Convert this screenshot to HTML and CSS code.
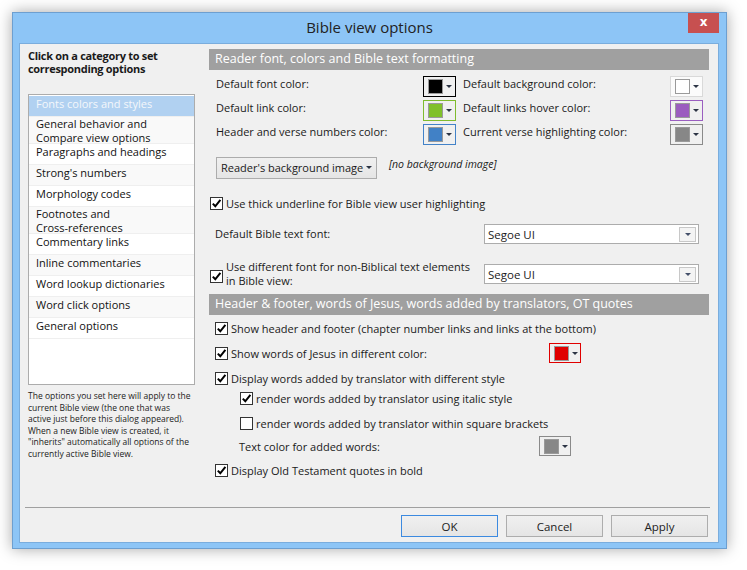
FILE: index.html
```html
<html>
    <head>
        <link rel="stylesheet" href="styles.css">
    </head>
    <body>
        <div class="window">
            <div class="titlebar">
                <span class="title">Bible view options</span>
                <span class="close">x</span>
            </div>
            <div class="content">
                <div class="main">
                    <!-- left side: categories -->
                    <div class="sidebar">
                        <div class="sideHead">Click on a category to set corresponding options</div>
                        <div class="catList">
                            <div class="cat selected">Fonts colors and styles</div>
                            <div class="cat double">General behavior and<br>Compare view options</div>
                            <div class="cat">Paragraphs and headings</div>
                            <div class="cat">Strong's numbers</div>
                            <div class="cat">Morphology codes</div>
                            <div class="cat double">Footnotes and<br>Cross-references</div>
                            <div class="cat">Commentary links</div>
                            <div class="cat">Inline commentaries</div>
                            <div class="cat">Word lookup dictionaries</div>
                            <div class="cat">Word click options</div>
                            <div class="cat">General options</div>
                        </div>
                        <div class="note">The options you set here will apply to the current Bible view (the one that was active just before this dialog appeared). When a new Bible view is created, it "inherits" automatically all options of the currently active Bible view.</div>
                    </div>

                    <!-- right side: options -->
                    <div class="options">
                        <div class="sectionBar">Reader font, colors and Bible text formatting</div>
                        <div class="colorGrid">
                            <div class="colorCell">
                                <span class="colorLabel">Default font color:</span>
                                <span class="colorBtn bBlack"><span class="swatch cBlack"></span><span class="arrow"></span></span>
                            </div>
                            <div class="colorCell">
                                <span class="colorLabel">Default background color:</span>
                                <span class="colorBtn bWhite"><span class="swatch cWhite"></span><span class="arrow"></span></span>
                            </div>
                            <div class="colorCell">
                                <span class="colorLabel">Default link color:</span>
                                <span class="colorBtn bGreen"><span class="swatch cGreen"></span><span class="arrow"></span></span>
                            </div>
                            <div class="colorCell">
                                <span class="colorLabel">Default links hover color:</span>
                                <span class="colorBtn bPurple"><span class="swatch cPurple"></span><span class="arrow"></span></span>
                            </div>
                            <div class="colorCell">
                                <span class="colorLabel">Header and verse numbers color:</span>
                                <span class="colorBtn bBlue"><span class="swatch cBlue"></span><span class="arrow"></span></span>
                            </div>
                            <div class="colorCell">
                                <span class="colorLabel">Current verse highlighting color:</span>
                                <span class="colorBtn bGrey"><span class="swatch cGrey"></span><span class="arrow"></span></span>
                            </div>
                        </div>

                        <div class="bgRow">
                            <span class="bgBtn">Reader's background image <span class="arrow"></span></span>
                            <span class="noImage">[no background image]</span>
                        </div>

                        <div class="checkRow thick">
                            <span class="check on"></span><span>Use thick underline for Bible view user highlighting</span>
                        </div>

                        <div class="fontRow first">
                            <span class="fontLabel">Default Bible text font:</span>
                            <span class="select">Segoe UI<span class="selArrow"><span class="arrow"></span></span></span>
                        </div>
                        <div class="fontRow second">
                            <span class="check on"></span>
                            <span class="fontLabel twoLines">Use different font for non-Biblical text elements<br>in Bible view:</span>
                            <span class="select">Segoe UI<span class="selArrow"><span class="arrow"></span></span></span>
                        </div>

                        <div class="sectionBar second">Header &amp; footer, words of Jesus, words added by translators, OT quotes</div>

                        <div class="checkRow r1"><span class="check on"></span><span>Show header and footer (chapter number links and links at the bottom)</span></div>
                        <div class="checkRow r2">
                            <span class="check on"></span><span class="wideLabel">Show words of Jesus in different color:</span>
                            <span class="colorBtn small bRed"><span class="swatch cRed"></span><span class="arrow"></span></span>
                        </div>
                        <div class="checkRow r3"><span class="check on"></span><span>Display words added by translator with different style</span></div>
                        <div class="checkRow sub r4"><span class="check on"></span><span>render words added by translator using italic style</span></div>
                        <div class="checkRow sub r5"><span class="check"></span><span>render words added by translator within square brackets</span></div>
                        <div class="checkRow subText r6">
                            <span class="subLabel">Text color for added words:</span>
                            <span class="colorBtn small bGrey"><span class="swatch cGrey"></span><span class="arrow"></span></span>
                        </div>
                        <div class="checkRow r7"><span class="check on"></span><span>Display Old Testament quotes in bold</span></div>
                    </div>
                </div>
                <div class="separator"></div>
                <div class="buttons">
                    <button class="btn default">OK</button>
                    <button class="btn">Cancel</button>
                    <button class="btn">Apply</button>
                </div>
            </div>
        </div>
    </body>
</html>
```

FILE: styles.css
```css
body{
    margin: 0;
    background-color: #ffffff;
    font-family: "Open Sans", "Noto Sans", sans-serif;
    font-size: 11px;
    color: #1a1a1a;
}
.window{
    position: relative;
    margin: 12px 0 0 12px;
    width: 713px;
    height: 535px;
    background-color: #8dc5f6;
    border: 1px solid #6d9fd0;
    box-shadow: 0 0 14px rgba(0, 0, 0, 0.35);
}
.titlebar{
    height: 30px;
    display: flex;
    align-items: center;
    justify-content: center;
}
.title{
    font-size: 15px;
    color: #222;
    margin-bottom: 3px;
}
.close{
    position: absolute;
    top: 0;
    right: 7px;
    width: 31px;
    height: 20px;
    background-color: #c75050;
    color: white;
    font-family: "DejaVu Sans", sans-serif;
    font-weight: bold;
    font-size: 12px;
    text-align: center;
    line-height: 19px;
}
.content{
    margin: 0 7px 0 6px;
    height: 498px;
    background-color: #f0f0f0;
    border: 1px solid #7aaddd;
}
.main{
    display: flex;
    height: 463px;
}

/* left side */
.sidebar{
    width: 167px;
    margin-left: 8px;
}
.sideHead{
    font-weight: bold;
    font-size: 11px;
    letter-spacing: -0.3px;
    line-height: 13px;
    padding-top: 5px;
    padding-right: 10px;
}
.catList{
    margin-top: 19px;
    height: 288px;
    background-color: white;
    border: 1px solid #acacac;
    padding-top: 1px;
}
.cat{
    height: 20px;
    line-height: 16px;
    padding-left: 7px;
    border-bottom: 1px solid #efefef;
    color: #111;
}
.cat:nth-child(even){
    background-color: #f9f9f9;
}
.cat.double{
    height: 26px;
    line-height: 14px;
}
.cat.selected{
    background-color: #b1d1f1;
    color: #f4f7fb;
}
.note{
    margin-top: 5px;
    font-size: 8.5px;
    line-height: 11.5px;
    color: #222;
}

/* right side */
.options{
    width: 500px;
    margin-left: 14px;
    padding-top: 5px;
}
.sectionBar{
    height: 21px;
    line-height: 20px;
    background-color: #a0a0a0;
    color: white;
    font-size: 12.5px;
    padding-left: 6px;
}
.sectionBar.second{
    margin-top: 6px;
}
.colorGrid{
    display: grid;
    grid-template-columns: 1fr 1fr;
    column-gap: 7px;
    row-gap: 3px;
    margin-top: 6px;
    padding: 0 6px 0 7px;
}
.colorCell{
    height: 21px;
    display: flex;
    align-items: center;
    justify-content: space-between;
}
.colorLabel{
    padding-bottom: 7px;
}
.colorBtn{
    box-sizing: border-box;
    width: 33px;
    height: 21px;
    display: flex;
    align-items: center;
    gap: 3px;
    padding-left: 4px;
    border: 1px solid #adadad;
    background-color: #f0f0f0;
}
.colorBtn.small{
    width: 32px;
    height: 20px;
}
.swatch{
    box-sizing: border-box;
    width: 15px;
    height: 15px;
    border: 1px solid #9a9a9a;
}
.arrow{
    display: inline-block;
    width: 0;
    height: 0;
    border-left: 3px solid transparent;
    border-right: 3px solid transparent;
    border-top: 3px solid #2c3444;
}
.bBlack{ border-color: #000; }
.bWhite{ border-color: #d9d9d9; background-color: #fbfbfb; }
.bGreen{ border-color: #7fbb2e; }
.bPurple{ border-color: #9a5ec0; }
.bBlue{ border-color: #4282c8; }
.bGrey{ border-color: #8a8a8a; }
.bRed{ border-color: #e00000; }
.cBlack{ background-color: #000; }
.cWhite{ background-color: #fff; }
.cGreen{ background-color: #80c02a; }
.cPurple{ background-color: #9b5cbf; }
.cBlue{ background-color: #4181c6; }
.cGrey{ background-color: #878787; }
.cRed{ background-color: #e00000; }

.bgRow{
    display: flex;
    align-items: flex-start;
    margin-top: 12px;
    padding-left: 7px;
}
.bgBtn{
    box-sizing: border-box;
    width: 161px;
    height: 22px;
    display: flex;
    align-items: center;
    gap: 3px;
    padding-left: 4px;
    padding-bottom: 1px;
    border: 1px solid #acacac;
    background-image: linear-gradient(#f0f0f0, #e5e5e5);
    font-size: 11px;
    white-space: nowrap;
}
.noImage{
    margin-left: 12px;
    margin-top: 0;
    font-style: italic;
    font-size: 10.5px;
}

.checkRow{
    height: 20px;
    display: flex;
    align-items: center;
    padding-left: 6px;
}
.check{
    box-sizing: border-box;
    width: 13px;
    height: 13px;
    margin-right: 3px;
    border: 1px solid #333;
    background-color: white;
    flex-shrink: 0;
}
.check.on{
    background-image: url("data:image/svg+xml;utf8,<svg xmlns='http://www.w3.org/2000/svg' width='11' height='11'><path d='M1.8 5.6 L4.3 8.3 L9.4 1.8' fill='none' stroke='black' stroke-width='2'/></svg>");
}
.checkRow.thick{
    margin-top: 14px;
    padding-left: 1px;
}
.fontRow{
    display: flex;
    align-items: center;
}
.fontRow.first{
    margin-top: 11px;
    padding-left: 6px;
}
.fontRow.first .fontLabel{
    padding-bottom: 2px;
}
.fontRow.second{
    margin-top: 16px;
    height: 28px;
    padding-left: 1px;
}
.fontRow.second .check{
    margin-top: 5px;
}
.fontLabel.twoLines{
    line-height: 14px;
}
.select{
    box-sizing: border-box;
    width: 215px;
    height: 20px;
    margin-left: auto;
    margin-right: 10px;
    display: flex;
    align-items: center;
    padding-left: 3px;
    background-color: white;
    border: 1px solid #acacac;
    font-size: 11.5px;
}
.selArrow{
    box-sizing: border-box;
    margin-left: auto;
    margin-right: 2px;
    width: 17px;
    height: 15px;
    display: flex;
    align-items: center;
    justify-content: center;
    border: 1px solid #c8c8c8;
    background-color: #f4f4f4;
}
.selArrow .arrow{
    border-top-color: #44506a;
}
.wideLabel{
    width: 318px;
}
.checkRow.sub{
    padding-left: 31px;
}
.checkRow.subText{
    padding-left: 30px;
}
.subLabel{
    width: 300px;
}
.r1{ margin-top: 3px; }
.r2{ margin-top: 5px; }
.r3{ margin-top: 5px; }
.r4{ margin-top: 0; }
.r5{ margin-top: 5px; }
.r6{ margin-top: 3px; }
.r7{ margin-top: 4px; }

/* footer */
.separator{
    height: 1px;
    margin: 0 8px 0 5px;
    background-color: #a0a0a0;
}
.buttons{
    display: flex;
    justify-content: flex-end;
    gap: 8px;
    margin-top: 7px;
    padding-right: 10px;
}
.btn{
    width: 97px;
    height: 22px;
    font-family: "Open Sans", "Noto Sans", sans-serif;
    font-size: 11.5px;
    color: #222;
    border: 1px solid #adadad;
    background-image: linear-gradient(#f0f0f0, #e5e5e5);
    padding: 0;
}
.btn.default{
    border-color: #3c8ae0;
}
```
